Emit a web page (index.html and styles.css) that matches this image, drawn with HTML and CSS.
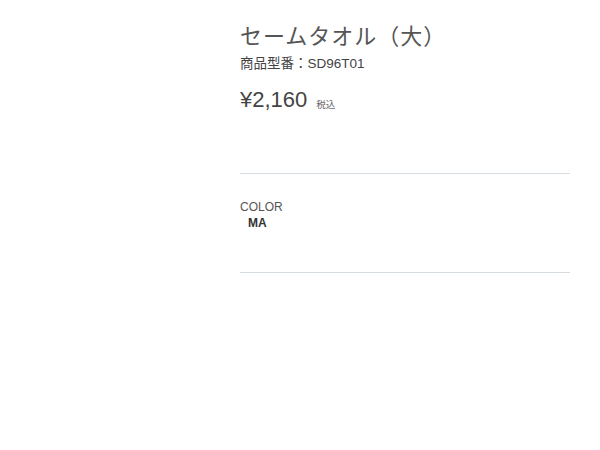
FILE: index.html
```html
<!DOCTYPE html>
<html lang="ja">
<head>
<meta charset="utf-8">
<link rel="stylesheet" href="styles.css">
</head>
<body>
<div class="page">
  <div class="detail">
    <h1 class="title">セームタオル（大）</h1>
    <p class="model">商品型番：SD96T01</p>
    <p class="price">¥2,160<span class="tax">税込</span></p>
    <div class="options">
      <div class="label">COLOR</div>
      <div class="value">MA</div>
    </div>
  </div>
</div>
</body>
</html>
```
FILE: styles.css
```css
html, body { margin: 0; padding: 0; background: #fff; }
body { font-family: "Liberation Sans", Arial, "Noto Sans CJK JP", sans-serif; color: #555; }
.page { padding-left: 240px; padding-right: 30px; }
.detail { width: 330px; }
.title { margin: 0; padding-top: 23px; font-size: 22px; font-weight: normal; line-height: 28px; letter-spacing: 1px; color: #555; }
.model { margin: 4px 0 0; font-size: 13.5px; line-height: 18px; color: #444; }
.price { margin: 13px 0 0; font-size: 22px; line-height: 28px; color: #444; }
.tax { font-size: 9.5px; margin-left: 9px; color: #666; position: relative; top: 1px; }
.options { margin-top: 55px; border-top: 1px solid #d5dde2; border-bottom: 1px solid #d5dde2; padding: 25px 0 40px; height: 33px; }
.label { font-size: 12px; line-height: 16px; color: #555; }
.value { font-size: 12px; line-height: 17px; font-weight: bold; color: #333; padding-left: 8px; }
```
